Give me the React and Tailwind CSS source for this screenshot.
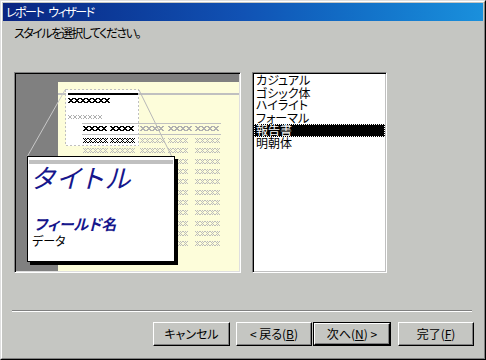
import React from 'react';

const jp = "font-['Noto_Sans_CJK_JP',sans-serif] [font-feature-settings:'palt']";

// pixel "x" glyphs used in the report thumbnail
const BOLD = [[0, 0], [1, 0], [4, 0], [5, 0], [1, 1], [2, 1], [3, 1], [4, 1], [2, 2], [3, 2], [1, 3], [2, 3], [3, 3], [4, 3], [0, 4], [1, 4], [4, 4], [5, 4]];
const THIN = [[0, 0], [4, 0], [1, 1], [3, 1], [2, 2], [1, 3], [3, 3], [0, 4], [4, 4], [2, 0], [2, 4]];
const SMALL = [[0, 0], [3, 0], [1, 1], [2, 1], [1, 2], [2, 2], [0, 3], [3, 3]];

function xs(x, y, n, g, adv) {
  let d = '';
  for (let i = 0; i < n; i++) {
    for (const [px, py] of g) d += `M${x + i * adv + px} ${y + py}h1v1h-1z`;
  }
  return d;
}

const COLS = [83, 110, 140, 168, 195];
const ROWS = [138, 148, 159, 169, 179, 190, 200, 210, 221, 231, 241];

function Thumbnail() {
  let grayHead = '';
  [140, 168, 195].forEach((c) => (grayHead += xs(c, 126, 4, BOLD, 6)));
  let grayRows = '';
  ROWS.forEach((r, i) => {
    COLS.forEach((c, j) => {
      if (i === 0 && j < 2) return;
      grayRows += xs(c, r, c === 168 ? 4 : 5, THIN, 5);
    });
  });
  const blackIn =
    xs(68, 98, 7, BOLD, 6) + xs(83, 126, 4, BOLD, 6) + xs(110, 126, 4, BOLD, 6) + xs(83, 138, 5, THIN, 5) + xs(110, 138, 5, THIN, 5);

  return (
    <svg width="223" height="197" viewBox="16 74 223 197" shapeRendering="crispEdges" className="block">
      <rect x="16" y="74" width="223" height="197" fill="#808080" />
      <rect x="58" y="82" width="181" height="189" fill="#fdfdda" />
      <rect x="58" y="93" width="181" height="2" fill="#c0c0c0" />
      <path d={grayHead} fill="#b0b0b0" />
      <path d={grayRows} fill="#bcbcbc" />
      <line x1="65" y1="90" x2="27" y2="157" stroke="#c8c8c8" shapeRendering="auto" />
      <line x1="139" y1="90" x2="172" y2="157" stroke="#b8b8b8" shapeRendering="auto" />
      <rect x="65.5" y="89.5" width="73" height="56" fill="#ffffff" stroke="#c0c0c0" strokeDasharray="2 2" />
      <rect x="68" y="93" width="70" height="2" fill="#000" />
      <path d={xs(68, 115, 7, SMALL, 5)} fill="#b0b0b0" />
      <rect x="82" y="123" width="139" height="1" fill="#c0c0c0" />
      <rect x="82" y="134" width="139" height="1" fill="#c0c0c0" />
      <path d={blackIn} fill="#000" />
    </svg>
  );
}

function Button({ children, isDefault, className }) {
  const face = (
    <div className="h-full flex items-center justify-center border border-t-white border-l-white border-r-black border-b-black shadow-[inset_-1px_-1px_0_#808080] text-[12px] text-black">
      {children}
    </div>
  );
  return (
    <div className={`h-[24px] ${className}`}>
      {isDefault ? <div className="h-full border border-black">{face}</div> : face}
    </div>
  );
}

const ITEMS = ['カジュアル', 'ゴシック体', 'ハイライト', 'フォーマル', '報告書', '明朝体'];

export default function App() {
  return (
    <div className={`w-[486px] h-[360px] bg-[#c5c6c2] border border-t-[#dfdfdf] border-l-[#dfdfdf] border-r-black border-b-black ${jp}`}>
      <div className="h-full flex flex-col p-[1px] border border-t-white border-l-white border-r-[#808080] border-b-[#808080]">
        <div className="h-[18px] flex items-center gap-[5px] pl-[3px] bg-linear-to-r from-[#0a2582] via-[#1152b4] to-[#1a90dc] text-white text-[12px] leading-none tracking-[-1.5px]">
          <span>レポート</span>
          <span>ウィザード</span>
        </div>

        <div className="pl-[11px] pt-[4px] text-[12px] leading-[16px] text-black tracking-[-1.5px]">スタイルを選択してください。</div>

        <div className="flex mt-[31px] pl-[11px] gap-[11px]">
          <div className="relative w-[227px] h-[201px] p-[1px] border border-t-[#808080] border-l-[#808080] border-r-white border-b-white shadow-[inset_1px_1px_0_#000,inset_-1px_-1px_0_#dfdfdf]">
            <Thumbnail />
            <div className="absolute left-[12px] top-[83px] w-[148px] h-[106px] bg-white border border-black shadow-[3px_3px_0_#000] flex flex-col">
              <div className="mt-[3px] mx-[1px] h-[4px] bg-[#c0c0c0]" />
              <div className="pl-[3px] text-[26px] leading-[26px] italic text-[#16168c] tracking-[3px]">タイトル</div>
              <div className="mt-[25px] pl-[6px] text-[15px] leading-[18px] italic font-bold text-[#16168c]">フィールド名</div>
              <div className="pl-[4px] text-[12px] leading-[15px] text-black">データ</div>
            </div>
          </div>

          <div className="w-[135px] h-[201px] p-[1px] border border-t-[#808080] border-l-[#808080] border-r-white border-b-white shadow-[inset_1px_1px_0_#000,inset_-1px_-1px_0_#c0c0c0]">
            <div className="h-full bg-white flex flex-col">
              {ITEMS.map((it) => (
                <div
                  key={it}
                  className={`h-[12.6px] leading-[12.6px] pl-[2px] text-[12px] ${
                    it === '報告書' ? 'bg-black text-white outline-1 outline-dotted outline-white -outline-offset-1' : 'text-black'
                  }`}
                >
                  {it}
                </div>
              ))}
            </div>
          </div>
        </div>

        <div className="mt-[37px] ml-[9px] w-[460px] border-t border-t-[#808080] border-b border-b-white" />

        <div className="flex mt-[10px]">
          <Button className="ml-[150px] w-[77px]">キャンセル</Button>
          <Button className="ml-[6px] w-[76px]">
            &lt; 戻る(<u>B</u>)
          </Button>
          <Button isDefault className="ml-[1px] w-[78px]">
            次へ(<u>N</u>) &gt;
          </Button>
          <Button className="ml-[7px] w-[76px]">
            完了(<u>F</u>)
          </Button>
        </div>
      </div>
    </div>
  );
}
